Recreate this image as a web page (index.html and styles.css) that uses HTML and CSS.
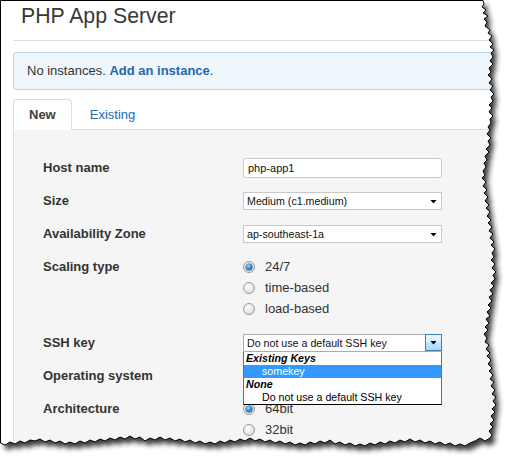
FILE: index.html
```html
<!DOCTYPE html>
<html>
<head>
<meta charset="utf-8">
<title>PHP App Server</title>
<link rel="stylesheet" href="styles.css">
</head>
<body>
<div class="page">
  <h1 class="title">PHP App Server</h1>
  <hr class="rule">
  <div class="alert">No instances. <a class="link" href="#">Add an instance</a>.</div>
  <ul class="tabs">
    <li class="tab active">New</li>
    <li class="tab"><a class="tablink" href="#">Existing</a></li>
  </ul>
  <div class="panel">
    <div class="row">
      <div class="label">Host name</div>
      <div class="ctl"><div class="input">php-app1</div></div>
    </div>
    <div class="row">
      <div class="label">Size</div>
      <div class="ctl"><div class="select">Medium (c1.medium)</div></div>
    </div>
    <div class="row">
      <div class="label">Availability Zone</div>
      <div class="ctl"><div class="select">ap-southeast-1a</div></div>
    </div>
    <div class="row row-scaling">
      <div class="label">Scaling type</div>
      <div class="radios">
        <div class="radio"><span class="dot checked"></span>24/7</div>
        <div class="radio"><span class="dot"></span>time-based</div>
        <div class="radio"><span class="dot"></span>load-based</div>
      </div>
    </div>
    <div class="row">
      <div class="label">SSH key</div>
      <div class="ctl">
        <div class="select open">Do not use a default SSH key
          <span class="btn"></span>
          <div class="dropdown">
            <div class="group">Existing Keys</div>
            <div class="opt sel">somekey</div>
            <div class="group">None</div>
            <div class="opt">Do not use a default SSH key</div>
          </div>
        </div>
      </div>
    </div>
    <div class="row">
      <div class="label">Operating system</div>
      <div class="ctl"></div>
    </div>
    <div class="row">
      <div class="label">Architecture</div>
      <div class="radios">
        <div class="radio"><span class="dot checked"></span>64bit</div>
        <div class="radio"><span class="dot"></span>32bit</div>
      </div>
    </div>
  </div>
</div>
<svg class="tear" width="513" height="469" viewBox="0 0 513 469" xmlns="http://www.w3.org/2000/svg">
  <defs>
    <filter id="blur" x="-5%" y="-5%" width="110%" height="110%">
      <feGaussianBlur stdDeviation="2.4"/>
    </filter>
    <path id="paper" d="M0.5 0.5 L483 0.5 L484 4 L482 7 L486 10 L483 13 L488 16 L484 19 L487 22 L485 26 L490 30 L488 33 L492 36 L489 40 L493 44 L490 47 L494 50 L491 53 L493 57 L490 61 L493 64 L489 68 L491 72 L488 75 L492 79 L489 83 L493 86 L490 90 L494 94 L491 97 L493 101 L489 105 L492 108 L489 112 L493 116 L490 119 L491 123 L488 127 L490 130 L487 134 L491 138 L488 141 L490 145 L486 149 L489 152 L485 156 L487 160 L484 163 L486 167 L483 171 L485 175 L482 178 L486 182 L483 186 L487 190 L484 193 L488 197 L485 201 L489 205 L486 208 L490 212 L487 216 L491 220 L488 223 L492 227 L489 231 L493 234 L490 238 L494 242 L491 245 L495 249 L492 253 L494 257 L491 260 L495 264 L492 268 L496 272 L493 275 L495 279 L491 283 L494 286 L490 290 L493 294 L489 297 L492 301 L488 305 L491 308 L487 312 L490 316 L486 319 L489 323 L485 327 L488 330 L484 334 L487 338 L485 342 L489 345 L486 349 L490 353 L487 356 L491 360 L488 364 L492 368 L489 371 L493 375 L490 379 L494 382 L491 386 L495 390 L492 394 L496 397 L493 401 L496 405 L492 409 L495 412 L491 416 L494 420 L490 424 L493 427 L489 431 L492 435 L490 438 L485 441 L480 438 L475 441 L470 443 L465 446 L460 444 L455 446 L450 443 L445 445 L440 442 L435 444 L430 441 L425 443 L420 440 L415 442 L410 439 L405 442 L400 440 L395 443 L390 441 L385 444 L380 442 L375 445 L370 443 L365 446 L360 444 L355 446 L350 443 L345 445 L340 442 L335 444 L330 440 L325 443 L320 441 L315 444 L310 442 L305 445 L300 443 L295 445 L290 442 L285 444 L280 441 L275 443 L270 440 L265 442 L260 439 L255 441 L250 438 L245 441 L240 439 L235 442 L230 440 L225 443 L220 441 L215 444 L210 442 L205 444 L200 441 L195 443 L190 440 L185 442 L180 439 L175 441 L170 438 L165 440 L160 437 L155 440 L150 438 L145 441 L140 437 L135 439 L130 436 L125 439 L120 437 L115 440 L110 438 L105 441 L100 439 L95 442 L90 440 L85 443 L80 441 L75 444 L70 442 L65 444 L60 441 L55 443 L50 440 L45 442 L40 439 L35 441 L30 440 L25 443 L20 441 L15 444 L10 442 L5 445 L0.5 443 Z"/>
    <clipPath id="outside">
      <path clip-rule="evenodd" d="M0 0H513V469H0Z M0.5 0.5 L483 0.5 L484 4 L482 7 L486 10 L483 13 L488 16 L484 19 L487 22 L485 26 L490 30 L488 33 L492 36 L489 40 L493 44 L490 47 L494 50 L491 53 L493 57 L490 61 L493 64 L489 68 L491 72 L488 75 L492 79 L489 83 L493 86 L490 90 L494 94 L491 97 L493 101 L489 105 L492 108 L489 112 L493 116 L490 119 L491 123 L488 127 L490 130 L487 134 L491 138 L488 141 L490 145 L486 149 L489 152 L485 156 L487 160 L484 163 L486 167 L483 171 L485 175 L482 178 L486 182 L483 186 L487 190 L484 193 L488 197 L485 201 L489 205 L486 208 L490 212 L487 216 L491 220 L488 223 L492 227 L489 231 L493 234 L490 238 L494 242 L491 245 L495 249 L492 253 L494 257 L491 260 L495 264 L492 268 L496 272 L493 275 L495 279 L491 283 L494 286 L490 290 L493 294 L489 297 L492 301 L488 305 L491 308 L487 312 L490 316 L486 319 L489 323 L485 327 L488 330 L484 334 L487 338 L485 342 L489 345 L486 349 L490 353 L487 356 L491 360 L488 364 L492 368 L489 371 L493 375 L490 379 L494 382 L491 386 L495 390 L492 394 L496 397 L493 401 L496 405 L492 409 L495 412 L491 416 L494 420 L490 424 L493 427 L489 431 L492 435 L490 438 L485 441 L480 438 L475 441 L470 443 L465 446 L460 444 L455 446 L450 443 L445 445 L440 442 L435 444 L430 441 L425 443 L420 440 L415 442 L410 439 L405 442 L400 440 L395 443 L390 441 L385 444 L380 442 L375 445 L370 443 L365 446 L360 444 L355 446 L350 443 L345 445 L340 442 L335 444 L330 440 L325 443 L320 441 L315 444 L310 442 L305 445 L300 443 L295 445 L290 442 L285 444 L280 441 L275 443 L270 440 L265 442 L260 439 L255 441 L250 438 L245 441 L240 439 L235 442 L230 440 L225 443 L220 441 L215 444 L210 442 L205 444 L200 441 L195 443 L190 440 L185 442 L180 439 L175 441 L170 438 L165 440 L160 437 L155 440 L150 438 L145 441 L140 437 L135 439 L130 436 L125 439 L120 437 L115 440 L110 438 L105 441 L100 439 L95 442 L90 440 L85 443 L80 441 L75 444 L70 442 L65 444 L60 441 L55 443 L50 440 L45 442 L40 439 L35 441 L30 440 L25 443 L20 441 L15 444 L10 442 L5 445 L0.5 443 Z"/>
    </clipPath>
  </defs>
  <path fill="#fff" fill-rule="evenodd" clip-path="url(#outside)" d="M0 0H513V469H0Z"/>
  <g clip-path="url(#outside)">
    <use href="#paper" fill="#1e1e1e" opacity="0.85" filter="url(#blur)" transform="translate(4 5)"/>
  </g>
  <use href="#paper" fill="none" stroke="#000" stroke-width="1"/>
</svg>
</body>
</html>
```

FILE: styles.css
```css
* { box-sizing: border-box; }
html, body { margin: 0; padding: 0; }
body {
  width: 513px;
  height: 469px;
  overflow: hidden;
  position: relative;
  background: #fff;
  color: #333;
  font-family: "Liberation Sans", Arial, sans-serif;
}
.page {
  padding: 1px 0 0 13px;
  height: 469px;
  overflow: hidden;
}
.title {
  margin: 3px 0 0 8px;
  font-size: 21.3px;
  font-weight: normal;
  line-height: 24px;
  color: #383838;
}
.rule {
  margin: 12px 0 0;
  border: 0;
  border-top: 1px solid #dddddd;
  height: 0;
}
.alert {
  margin-top: 11px;
  border: 1px solid #b9d7ef;
  border-right: 0;
  background: #eff7fd;
  border-radius: 4px 0 0 4px;
  padding: 9px 13px;
  font-size: 13px;
  line-height: 18px;
  color: #333;
}
.link {
  color: #1d68b3;
  font-weight: bold;
  text-decoration: none;
}
.tabs {
  list-style: none;
  margin: 9px 0 0;
  padding: 0;
  display: flex;
  align-items: flex-start;
  height: 31px;
  border-bottom: 1px solid #dddddd;
}
.tab {
  height: 31px;
  padding: 6px 15px 5px;
  margin-right: 2px;
  border: 1px solid transparent;
  border-radius: 4px 4px 0 0;
  font-size: 13px;
  line-height: 18px;
}
.tab.active {
  background: #fff;
  border-color: #dddddd;
  border-bottom-color: transparent;
  font-weight: bold;
  color: #404040;
}
.tablink {
  color: #1d68b3;
  text-decoration: none;
}
.panel {
  background: #f5f5f5;
  border-left: 1px solid #dddddd;
  padding: 21px 0 0 29px;
  height: 339px;
}
.row {
  display: flex;
  align-items: flex-start;
  padding: 6px 0;
}
.row-scaling { padding-bottom: 7px; }
.label {
  width: 200px;
  flex-shrink: 0;
  font-size: 13px;
  font-weight: bold;
  line-height: 21px;
  color: #333;
}
.ctl {
  min-height: 21px;
  display: flex;
  align-items: center;
}
.input {
  width: 199px;
  height: 20px;
  border: 1px solid #cccccc;
  border-radius: 3px;
  background: #fff;
  padding-left: 4px;
  font-size: 11px;
  line-height: 18px;
  color: #111;
}
.select {
  position: relative;
  width: 199px;
  height: 18px;
  border: 1px solid #c9c9c9;
  background: #fff;
  padding-left: 3px;
  font-size: 10.67px;
  line-height: 16px;
  color: #111;
}
.select::after {
  content: "";
  position: absolute;
  right: 4px;
  top: 7px;
  width: 7px;
  height: 4px;
  background: #000;
  clip-path: polygon(0 0, 100% 0, 50% 100%);
}
.select.open { border-color: #abadb3; }
.select.open::after { display: none; }
.btn {
  position: absolute;
  top: -1px;
  right: -1px;
  width: 17px;
  height: 17px;
  border: 1px solid #3c7fb1;
  background: linear-gradient(#eaf6fd, #d9f0fc 50%, #bee6fd 50%, #a7d9f5);
}
.btn::after {
  content: "";
  position: absolute;
  left: 4px;
  top: 6px;
  width: 7px;
  height: 4px;
  background: #000;
  clip-path: polygon(0 0, 100% 0, 50% 100%);
}
.dropdown {
  position: absolute;
  top: calc(100% + 1px);
  left: -1px;
  width: 199px;
  background: #fff;
  border: 1px solid #6e6e6e;
  border-top: 0;
  border-bottom-color: #000;
  font-size: 10.67px;
  line-height: 13px;
  color: #000;
  z-index: 2;
}
.group {
  font-weight: bold;
  font-style: italic;
  padding-left: 2px;
}
.opt { padding-left: 18px; }
.opt.sel {
  background: #3399ff;
  color: #fff;
}
.radios {
  display: flex;
  flex-direction: column;
}
.radio {
  display: flex;
  align-items: center;
  height: 21px;
  font-size: 13px;
  color: #333;
}
.dot {
  position: relative;
  width: 12px;
  height: 12px;
  margin-right: 10px;
  border-radius: 50%;
  border: 1px solid #9c9c9c;
  background: radial-gradient(circle at 40% 35%, #ffffff, #e6e6e6 55%, #c9c9c9);
}
.dot.checked::after {
  content: "";
  position: absolute;
  left: 2px;
  top: 2px;
  width: 6px;
  height: 6px;
  border-radius: 50%;
  background: radial-gradient(circle at 40% 35%, #a8e4ff, #2a86d2 50%, #0b3f78);
  box-shadow: 0 0 0 0.5px #123c66;
}
.tear {
  position: absolute;
  left: 0;
  top: 0;
  pointer-events: none;
}
```
